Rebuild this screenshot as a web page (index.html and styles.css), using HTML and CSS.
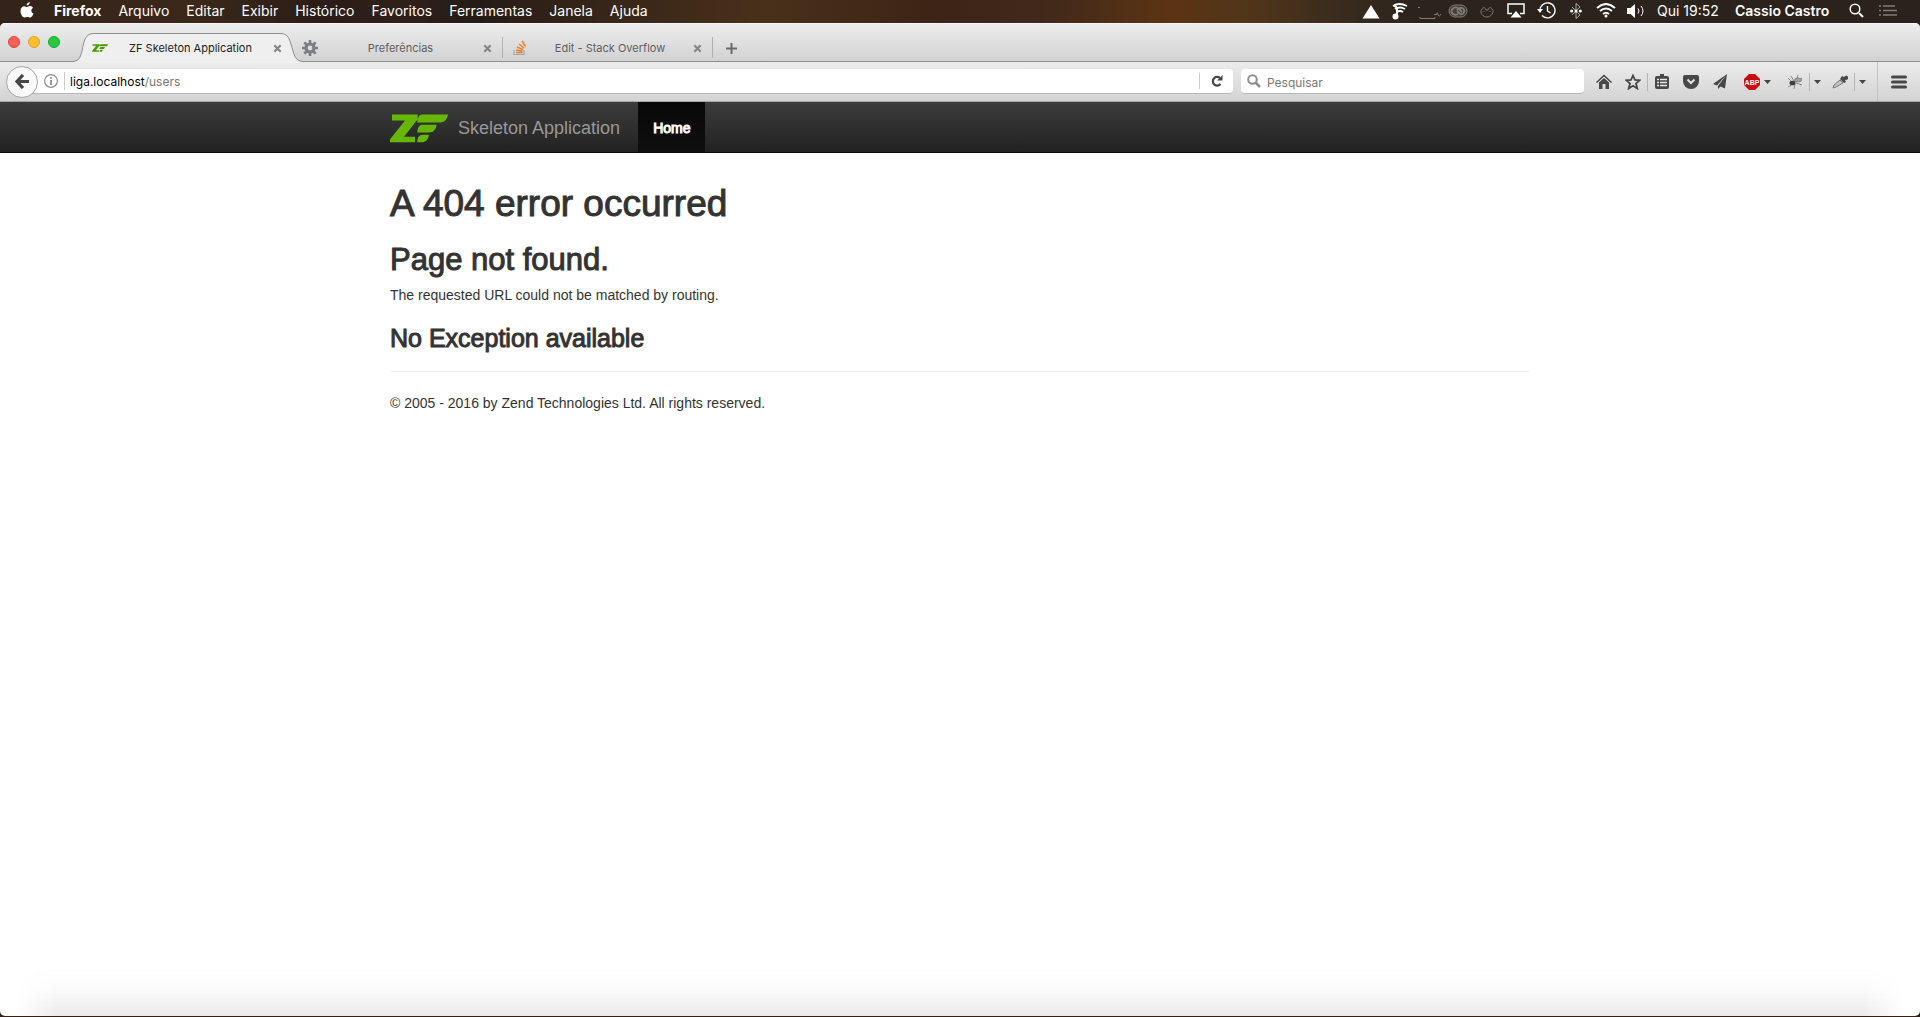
FILE: index.html
```html
<!DOCTYPE html>
<html lang="pt">
<head>
<meta charset="utf-8">
<title>ZF Skeleton Application</title>
<link rel="stylesheet" href="styles.css">
</head>
<body>
<svg class="defs" aria-hidden="true">
  <symbol id="zf" viewBox="0 0 174 86"><path d="M6 1H83V15L42 68H75V84H0V75L45 19H6ZM97 1H174C172 16 162 25 150 25H82C82 11 88 1 97 1ZM97 32H140C138 46 130 55 118 55H82C82 42 88 32 97 32ZM97 62H117C115 75 108 84 97 84H82C82 71 87 62 97 62Z"/></symbol>
  <symbol id="close" viewBox="0 0 10 10"><path d="M1.5 1.5L8.5 8.5M8.5 1.5L1.5 8.5" fill="none" stroke="currentColor" stroke-width="2.4"/></symbol>
  <symbol id="caret" viewBox="0 0 7 4"><path d="M0 0H7L3.500 4Z"/></symbol>
</svg>

<header class="menubar">
  <svg class="apple" width="14" height="17" viewBox="0 0 14 17"><path d="M9.800 0C9.900 1.900 8.300 3.600 6.600 3.600 6.400 1.900 8.100.2 9.800 0ZM7 5C7.700 5 8.600 4.100 10 4.100 11.300 4.100 12.400 4.700 13 5.700 10.600 7.200 11 10.500 13.500 11.500 12.900 13.200 11.600 15.500 10.300 15.500 9.200 15.500 8.700 14.900 7.300 14.900 5.900 14.900 5.400 15.500 4.400 15.500 2.500 15.500.5 12 .5 9 .5 6 2.200 4.200 4.300 4.200 5.500 4.200 6.400 5 7 5Z"/></svg>
  <nav class="menus" aria-label="Menu">
    <strong class="app">Firefox</strong><span>Arquivo</span><span>Editar</span><span>Exibir</span><span>Histórico</span><span>Favoritos</span><span>Ferramentas</span><span>Janela</span><span>Ajuda</span>
  </nav>
  <div class="status">
    <span class="slot"><svg width="18" height="16" viewBox="0 0 18 16"><path d="M9 2L17.500 15.500H.5Z"/></svg></span>
    <span class="slot"><svg width="17" height="18" viewBox="0 0 17 18"><g class="line"><path d="M2 4Q8 0 16 4M4 7Q9 4 14 7M6 10Q9 8 12 10" stroke-width="1.800"/><path d="M3 3L6 6V15" stroke-width="2"/></g><circle cx="4.500" cy="14.500" r="3"/></svg></span>
    <span class="slot dim"><svg width="24" height="16" viewBox="0 0 24 16"><path class="line" d="M1 4.500H3M3 14V15.500H18V14M17 11.500H20Q20 8 21 11.500T24 11"/></svg></span>
    <span class="slot dim"><svg width="20" height="14" viewBox="0 0 20 14"><g class="line"><rect x="1" y="1" width="18" height="12" rx="6" fill="#6b6560"/><path d="M10 10Q7 12 4.500 9.500T5 4.500Q8 2 11 5L14 8M9 7L12 10Q15 11 16 8T14 4Q12 3 9 6" stroke-width="1.800"/></g></svg></span>
    <span class="slot dim"><svg width="14" height="14" viewBox="0 0 14 14"><path class="line" d="M2 5C-1 9 3 13 7 13S15 8 12 5C11 3 9 3 8 6H6C5 3 3 3 2 5M4 7V8M10 7V8"/></svg></span>
    <span class="slot wide"><svg width="18" height="15" viewBox="0 0 18 15"><path class="line" d="M5 10.500H1V1H17V10.500H13" stroke-width="1.500"/><path d="M9 8L14.500 14.500H3.500Z"/></svg></span>
    <span class="slot wide"><svg width="19" height="17" viewBox="0 0 19 17"><path class="line" d="M3 9A7.500 7.500 0 1 1 5 13.500M10.500 4V9L13.500 11" stroke-width="1.400"/><path d="M0 7H6L3 11Z"/></svg></span>
    <span class="slot wide"><svg width="12" height="16" viewBox="0 0 12 16"><path class="line half" d="M2 4L10 12 6 15.500V.5L10 4 2 12"/><circle cx="1.700" cy="8" r="1.500"/><circle cx="6" cy="8" r="1.500"/><circle cx="10.300" cy="8" r="1.500"/></svg></span>
    <span class="slot wide"><svg width="20" height="15" viewBox="0 0 20 15"><path class="line" d="M1 5Q10-3 19 5M4 8Q10 3 16 8M7 11Q10 8.500 13 11" stroke-width="2"/><circle cx="10" cy="13" r="1.500"/></svg></span>
    <span class="slot wide"><svg width="18" height="14" viewBox="0 0 18 14"><path d="M0 4H3.500L8 0V14L3.500 10H0Z"/><path class="line" d="M11 4.500Q13 7 11 9.500M14 2Q18 7 14 12"/></svg></span>
    <time class="clock">Qui 19:52</time>
    <strong class="user">Cassio Castro</strong>
    <span class="slot wide"><svg width="15" height="15" viewBox="0 0 15 15"><path class="line" d="M10 10L14 14" stroke-width="2"/><circle class="line" cx="6" cy="6" r="4.800" stroke-width="1.500"/></svg></span>
    <span class="slot list dim"><svg width="18" height="11" viewBox="0 0 18 11"><path class="line" d="M0 1H2M4 1H16M0 5.500H2M4 5.500H18M0 10H2M4 10H18" stroke-width="1.500"/></svg></span>
  </div>
</header>

<div class="window">
  <div class="tabstrip">
    <div class="lights"><button class="red" aria-label="Fechar"></button><button class="yellow" aria-label="Minimizar"></button><button class="green" aria-label="Ampliar"></button></div>
    <div class="tab active">
      <svg class="shape" width="232" height="30" viewBox="0 0 232 30"><path d="M0 28.500C6 28.500 8 26 10 18C12 8 13 1 22 .500H209C217 1 218 8 221 18C223 26 226 28.500 232 28.500V30H0Z" fill="#efefef"/><path d="M0 28.500C6 28.500 8 26 10 18C12 8 13 .500 22 .500H209C217 .500 218 8 221 18C223 26 226 28.500 232 28.500" fill="none" stroke="#8d8d8d"/></svg>
      <svg class="favicon zf-green" width="16" height="8"><use href="#zf"/></svg>
      <span class="title">ZF Skeleton Application</span>
      <button class="x" aria-label="Fechar aba"><svg width="9" height="9"><use href="#close"/></svg></button>
    </div>
    <div class="tab second">
      <svg class="favicon" width="16" height="16" viewBox="0 0 16 16"><circle cx="8" cy="8" r="4" fill="none" stroke="#7b7d80" stroke-width="3.200"/><path d="M8 0V3M8 13V16M0 8H3M13 8H16M2.300 2.300L4.500 4.500M11.500 11.500L13.700 13.700M13.700 2.300L11.500 4.500M4.500 11.500L2.300 13.700" stroke="#7b7d80" stroke-width="2.600"/></svg>
      <span class="title">Preferências</span>
      <button class="x" aria-label="Fechar aba"><svg width="9" height="9"><use href="#close"/></svg></button>
    </div>
    <div class="tab third">
      <svg class="favicon" width="14" height="16" viewBox="0 0 14 16"><path d="M1 10V14.500H11V10" fill="none" stroke="#a3a4a6" stroke-width="1.200"/><path d="M3 12.500H9.500M3 10L9.500 11M4 7L10 9.500M6 4L11 8M9 1L12.500 6.500" stroke="#ee7f2d" stroke-width="1.500"/></svg>
      <span class="title">Edit - Stack Overflow</span>
      <button class="x" aria-label="Fechar aba"><svg width="9" height="9"><use href="#close"/></svg></button>
    </div>
    <button class="newtab" aria-label="Nova aba"><svg width="11" height="11" viewBox="0 0 11 11"><path d="M5.500 0V11M0 5.500H11" stroke="#6a6a6a" stroke-width="2"/></svg></button>
  </div>

  <div class="toolbar">
    <button class="back" aria-label="Voltar"><svg width="15" height="15" viewBox="0 0 15 15"><path d="M8 1L2 7.500 8 14M2 7.500H14" fill="none" stroke="#474747" stroke-width="3.200"/></svg></button>
    <div class="address">
      <svg class="info" width="14" height="14" viewBox="0 0 14 14"><circle cx="7" cy="7" r="6.400" fill="none" stroke="#8c8c8c" stroke-width="1.200"/><path d="M7 3V4.700M7 6V11" stroke="#8c8c8c" stroke-width="1.800"/></svg>
      <a class="url" href="#">liga.localhost<span>/users</span></a>
      <button class="reload" aria-label="Recarregar"><svg width="12" height="12" viewBox="0 0 12 12"><path d="M9.500 9A4.300 4.300 0 1 1 9 3" fill="none" stroke="#474747" stroke-width="2.200"/><path d="M11.500 0V5.500H6Z" fill="#474747"/></svg></button>
    </div>
    <label class="search">
      <svg width="14" height="14" viewBox="0 0 14 14"><circle cx="5.500" cy="5.500" r="4.300" fill="none" stroke="#8e8e8e" stroke-width="2"/><path d="M8.500 8.500L13 13" stroke="#8e8e8e" stroke-width="2.500"/></svg>
      <input type="search" placeholder="Pesquisar" aria-label="Pesquisar">
    </label>
    <div class="tools">
      <button aria-label="Início"><svg width="16" height="15" viewBox="0 0 16 15"><path d="M0 8L8 .500 16 8 15 9 8 2.500 1 9ZM3 8.500L8 4 13 8.500V15H9.500V10H6.500V15H3Z"/></svg></button>
      <button aria-label="Favoritar"><svg width="16" height="16" viewBox="0 0 16 16"><path d="M8 1.500L10 6 14.700 6.300 11 9.500 12.300 14.500 8 11.800 3.700 14.500 5 9.500 1.300 6.300 6 6Z" fill="none" stroke="#474747" stroke-width="1.800"/></svg></button>
      <button class="split" aria-label="Lista de favoritos"><svg width="14" height="15" viewBox="0 0 14 15"><path d="M5 2V0H9V2H12Q14 2 14 4V13Q14 15 12 15H2Q0 15 0 13V4Q0 2 2 2Z"/><path d="M2 5.500H4M5 5.500H12M2 8.500H4M5 8.500H12M2 11.500H4M5 11.500H12" stroke="#e8e8e8" stroke-width="1.400"/></svg></button>
      <button aria-label="Pocket"><svg width="16" height="14" viewBox="0 0 16 14"><path d="M2 0H14Q16 0 16 2V6A8 8 0 0 1 0 6V2Q0 0 2 0Z"/><path d="M4.500 4.500L8 8 11.500 4.500" fill="none" stroke="#e2e2e2" stroke-width="2"/></svg></button>
      <button aria-label="Compartilhar"><svg width="14" height="15" viewBox="0 0 14 15"><path d="M14 0L0 10 4 11.500ZM14 0L5 12V15L7.500 12.500 12 14.500Z"/></svg></button>
      <button class="abp" aria-label="Adblock Plus"><svg width="16" height="16" viewBox="0 0 16 16"><path d="M5 0H11L16 5V11L11 16H5L0 11V5Z" fill="#c90b0b"/><text x="8" y="11" text-anchor="middle" class="abp-text">ABP</text></svg><svg width="7" height="4"><use href="#caret"/></svg></button>
      <button class="bug" aria-label="Firebug"><svg width="16" height="14" viewBox="0 0 16 14"><path d="M1 3L5 7M4 1L7 6M15 3L9 7M11 0L9 6M1 12L6 9M7 14L8 9M15 10L9 8" stroke="#898989" stroke-width="1" fill="none"/><ellipse cx="5.500" cy="8" rx="3" ry="2.300" fill="#3e3e3e"/><ellipse cx="11" cy="5" rx="3.500" ry="2" fill="#a0a0a0" stroke="#777" stroke-width=".8"/></svg></button>
      <button class="drop split" aria-label="Opções do Firebug"><svg width="7" height="4"><use href="#caret"/></svg></button>
      <button class="picker" aria-label="Conta-gotas"><svg width="16" height="14" viewBox="0 0 16 14"><path d="M10 1L12 2Q15-1 16 2T13 5L14 7 12 8 8 4Z"/><path d="M8 5L11 8 4 12 1 13 2 10Z" fill="#c4c4c4" stroke="#777"/></svg></button>
      <button class="drop split" aria-label="Opções do conta-gotas"><svg width="7" height="4"><use href="#caret"/></svg></button>
      <button class="burger" aria-label="Abrir menu"><svg width="16" height="14" viewBox="0 0 16 14"><path d="M1.500 2H14.500M1.500 7H14.500M1.500 12H14.500" stroke="#474747" stroke-width="3" stroke-linecap="round"/></svg></button>
    </div>
  </div>

  <div class="page">
    <nav class="navbar">
      <div class="container">
        <a class="brand" href="#"><svg class="logo" width="58" height="29"><use href="#zf"/></svg>Skeleton Application</a>
        <a class="home" href="#">Home</a>
      </div>
    </nav>
    <main class="container content">
      <h1>A 404 error occurred</h1>
      <h2>Page not found.</h2>
      <p>The requested URL could not be matched by routing.</p>
      <h3>No Exception available</h3>
      <hr>
      <footer>© 2005 - 2016 by Zend Technologies Ltd. All rights reserved.</footer>
    </main>
    <div class="shade"></div>
  </div>
</div>
</body>
</html>
```

FILE: styles.css
```css
* { box-sizing: border-box; }

body {
  margin: 0;
  min-height: 100vh;
  display: flex;
  flex-direction: column;
  background: #352015;
  font-family: Inter, "Liberation Sans", sans-serif;
}

button {
  margin: 0;
  padding: 0;
  border: 0;
  background: none;
  display: flex;
  align-items: center;
  justify-content: center;
}

svg { flex: none; display: block; }
.defs { position: absolute; width: 0; height: 0; }
a { text-decoration: none; color: inherit; }

/* System menu bar */
.menubar {
  height: 23px;
  display: flex;
  align-items: center;
  padding: 0 0 2px 20px;
  color: #fff;
  fill: #fff;
  font-size: 14px;
  line-height: 20px;
  white-space: nowrap;
  background: linear-gradient(90deg, #33231a 0%, #3b281b 10%, #2a1c16 17%, #30201a 21%, #241c18 25%, #2d2017 27%, #49301a 40%, #3c2416 49%, #40281a 54%, #5b3413 61%, #51351a 65%, #382b1e 70%, #2b231c 74%, #2b221d 100%);
}
.menus { display: flex; gap: 17px; margin-left: 20px; }
.menubar strong { font-weight: 600; }
.menubar .app { font-weight: 700; }
.status { display: flex; align-items: center; margin-left: auto; }
.slot { width: 29px; display: flex; justify-content: center; }
.slot.wide { width: 30px; }
.slot.list { width: 34px; margin-right: 15px; }
.line { fill: none; stroke: #fff; }
.half { opacity: .6; }
.dim { opacity: .4; }
.clock { width: 78px; padding-left: 6px; }
.user { width: 112px; padding-left: 6px; }

/* Browser window */
.window {
  flex: 1;
  display: flex;
  flex-direction: column;
  margin-bottom: 1px;
  border-radius: 5px;
  overflow: hidden;
  background: #fff;
}
.tabstrip {
  height: 39px;
  display: flex;
  align-items: stretch;
  background: linear-gradient(#ededed, #d2d2d2);
  border-top: 1px solid #f6f6f6;
  border-bottom: 1px solid #8d8d8d;
}
.lights { display: flex; gap: 8px; padding: 12px 0 0 8px; width: 72px; }
.lights button { width: 12px; height: 12px; border-radius: 50%; border: 1px solid; }
.lights .red { background: #ff5f57; border-color: #e0443e; }
.lights .yellow { background: #ffbd2e; border-color: #dea123; }
.lights .green { background: #28c940; border-color: #14ab2d; }

.tab {
  position: relative;
  display: flex;
  align-items: center;
  margin-top: 9px;
  padding-top: 2px;
  font-size: 11px;
  line-height: 16px;
  color: #5f5f5f;
}
.tab .title { flex: 1; text-align: center; white-space: nowrap; }
.tab .x { color: #858585; width: 9px; height: 20px; }
.tab > * { position: relative; }
.tab > .shape { position: absolute; left: 0; top: 0; }
.tab.active { width: 230px; padding-left: 20px; padding-right: 20px; color: #222; }
.tab.second { width: 200px; padding-right: 10px; }
.tab.third { width: 210px; padding-left: 11px; padding-right: 10px; }
.tab.second::after, .tab.third::after {
  content: "";
  position: absolute;
  right: -1px;
  top: 4px;
  bottom: 3px;
  width: 1px;
  background: #b0b0b0;
}
.zf-green { fill: #4c9a00; }
.newtab { width: 38px; margin-top: 12px; }

.toolbar {
  height: 40px;
  display: flex;
  align-items: center;
  padding-left: 6px;
  background: linear-gradient(#ececec, #d3d3d3);
  border-bottom: 1px solid #a6a6a6;
}
.back {
  position: relative;
  width: 32px;
  height: 32px;
  border: 1px solid #a5a5a5;
  border-radius: 50%;
  background: #fafafa;
}
.address, .search {
  height: 25px;
  display: flex;
  align-items: center;
  background: #fff;
  border-bottom: 1px solid #b9b9b9;
  border-radius: 4px;
  font-size: 12px;
}
.address { flex: 1; margin-left: -10px; padding-left: 16px; }
.url {
  flex: 1;
  margin-left: 6px;
  padding: 2px 0 0 5px;
  border-left: 1px solid #ccc;
  line-height: 16px;
  color: #000;
}
.url span { color: #777; }
.reload { width: 34px; height: 16px; border-left: 1px solid #ccc; }
.search { width: 343px; margin-left: 8px; padding-left: 6px; gap: 6px; }
.search input {
  flex: 1;
  min-width: 0;
  border: 0;
  padding: 2px 0 0;
  outline: 0;
  background: none;
  font: inherit;
}
.search input::placeholder { color: #777; opacity: 1; }
.tools { display: flex; align-items: center; padding-left: 5px; fill: #474747; }
.tools button { width: 29px; height: 18px; }
.tools .split { border-left: 1px solid #b5b5b5; }
.tools .abp { width: 38px; gap: 4px; margin-left: 4px; }
.abp-text { font: bold 7px "Liberation Sans", sans-serif; fill: #fff; }
.tools .bug { margin-left: 4px; }
.tools .drop { width: 16px; }
.tools .burger { width: 43px; height: 39px; margin-left: 7px; border-left: 1px solid #c4c4c4; }

/* Web page */
.page {
  flex: 1;
  display: flex;
  flex-direction: column;
  font-family: "Liberation Sans", Arial, sans-serif;
  font-size: 14px;
  line-height: 20px;
  color: #333;
}
.container { width: 100%; max-width: 1170px; margin: 0 auto; padding: 0 15px; }
.navbar { background: linear-gradient(#3c3c3c, #222); border-bottom: 1px solid #080808; }
.navbar .container { display: flex; align-items: stretch; height: 50px; }
.brand {
  display: flex;
  align-items: center;
  gap: 10px;
  padding: 2px 18px 0 0;
  font-size: 18px;
  color: #999;
}
.logo { fill: #68b604; }
.home {
  display: flex;
  align-items: center;
  padding: 2px 15px 0;
  color: #fff;
  -webkit-text-stroke: 1px #fff;
  background: linear-gradient(#080808, #0f0f0f);
}
h1, h2, h3 { margin: 0; font-weight: normal; -webkit-text-stroke: 1px #333; }
h1 { padding-top: 31px; font-size: 37px; line-height: 40px; }
h2 { margin-top: 19px; font-size: 31px; line-height: 34px; }
p { margin: 8px 0 0; }
h3 { margin-top: 19px; font-size: 25px; line-height: 28px; }
hr { margin: 19px 0 21px; border: 0; border-top: 1px solid #eee; }
.shade {
  height: 48px;
  margin-top: auto;
  background: linear-gradient(transparent, rgba(0, 0, 0, .02) 50%, rgba(0, 0, 0, .08));
  -webkit-mask-image: linear-gradient(90deg, transparent 16px, #000 56px, #000 calc(100% - 56px), transparent calc(100% - 16px));
  mask-image: linear-gradient(90deg, transparent 16px, #000 56px, #000 calc(100% - 56px), transparent calc(100% - 16px));
}
```
